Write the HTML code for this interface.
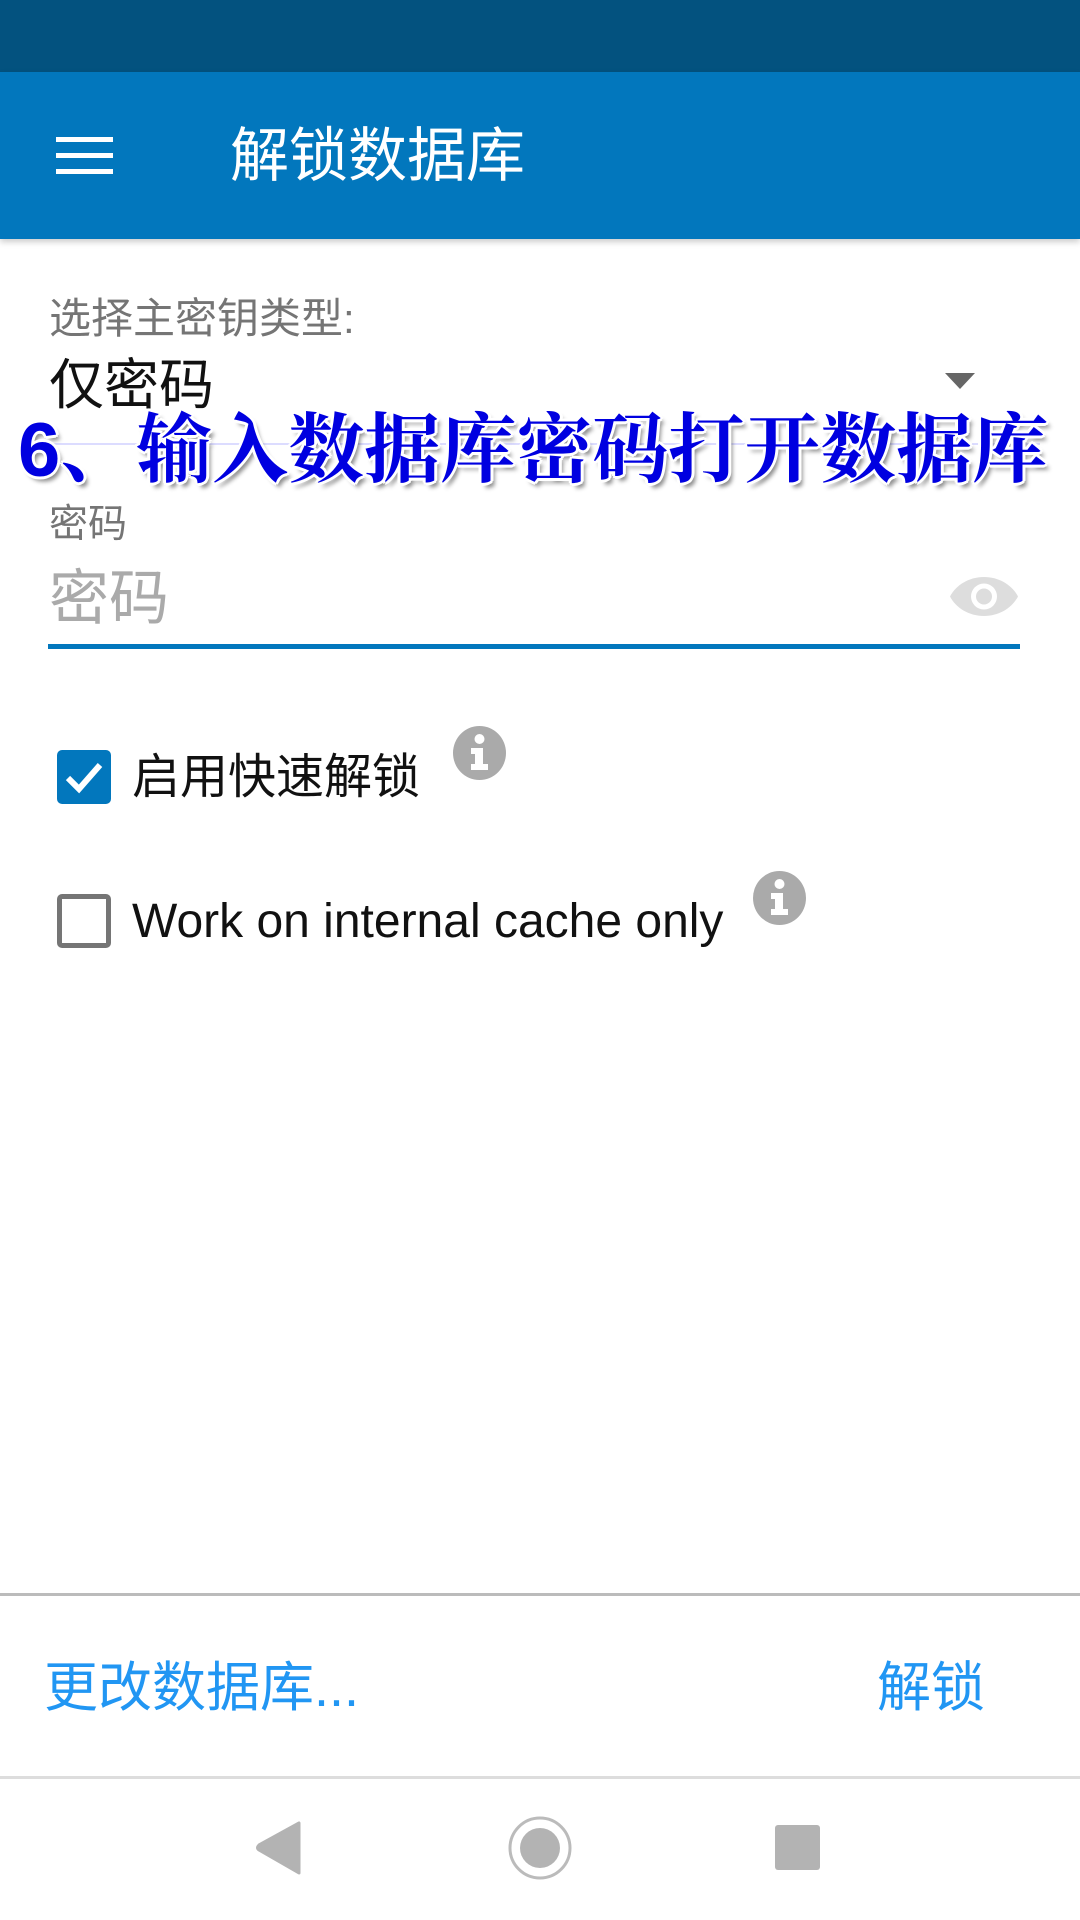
<!DOCTYPE html>
<html><head><meta charset="utf-8"><style>
*{margin:0;padding:0;box-sizing:border-box}
body{width:1080px;height:1920px;background:#fff;position:relative;overflow:hidden;font-family:"Liberation Sans","Noto Sans CJK SC",sans-serif}
.a{position:absolute;white-space:nowrap;line-height:1}
</style></head><body>
<div class="a" style="left:0;top:0;width:1080px;height:72px;background:#03527f"></div>
<div class="a" style="left:0;top:72px;width:1080px;height:167px;background:#0277bd;box-shadow:0 3px 6px rgba(0,0,0,0.2)"></div>
<div class="a" style="left:56px;top:137px;width:57px;height:5px;background:#fff"></div>
<div class="a" style="left:56px;top:153px;width:57px;height:5px;background:#fff"></div>
<div class="a" style="left:56px;top:169px;width:57px;height:5px;background:#fff"></div>
<div class="a" style="left:230px;top:127px;font-size:59px;color:#fff">解锁数据库</div>

<div class="a" style="left:49px;top:298px;font-size:42px;color:#757575">选择主密钥类型:</div>
<div class="a" style="left:49px;top:358px;font-size:55px;color:#111">仅密码</div>
<svg class="a" style="left:945px;top:373px" width="30" height="16"><path d="M0 0H30L15 16Z" fill="#666"/></svg>
<div class="a" style="left:40px;top:443px;width:1000px;height:2px;background:#dcdcff"></div>

<div class="a" style="left:49px;top:505px;font-size:39px;color:#757575">密码</div>
<div class="a" style="left:49px;top:569px;font-size:60px;color:#aaa">密码</div>
<svg class="a" style="left:949px;top:575px" width="70" height="43" viewBox="0 0 70 43"><path d="M35 2C20 2 7 10 1 21.5 7 33 20 41 35 41S63 33 69 21.5C63 10 50 2 35 2Z" fill="#ddd"/><circle cx="35" cy="21.5" r="13" fill="#fff"/><circle cx="35" cy="21.5" r="8" fill="#ddd"/></svg>
<div class="a" style="left:48px;top:644px;width:972px;height:5px;background:#0277bd"></div>

<div class="a" style="left:57px;top:750px;width:54px;height:54px;background:#0277bd;border-radius:5px"></div>
<svg class="a" style="left:57px;top:750px" width="54" height="54"><path d="M11 28L22 39L43 15" stroke="#fff" stroke-width="6" fill="none"/></svg>
<div class="a" style="left:132px;top:754px;font-size:48px;color:#111">启用快速解锁</div>
<svg class="a" style="left:453px;top:726px" width="53" height="54" viewBox="0 0 53 54"><ellipse cx="26.5" cy="27" rx="26.5" ry="27" fill="#aaa"/><circle cx="26.5" cy="13" r="5" fill="#fff"/><path d="M18 22H30V38H35V44H18V38H22V28H18Z" fill="#fff"/></svg>

<div class="a" style="left:57px;top:894px;width:54px;height:54px;border:5px solid #757575;border-radius:5px"></div>
<div class="a" style="left:132px;top:898px;font-size:48px;color:#111">Work on internal cache only</div>
<svg class="a" style="left:753px;top:871px" width="53" height="54" viewBox="0 0 53 54"><ellipse cx="26.5" cy="27" rx="26.5" ry="27" fill="#aaa"/><circle cx="26.5" cy="13" r="5" fill="#fff"/><path d="M18 22H30V38H35V44H18V38H22V28H18Z" fill="#fff"/></svg>

<div class="a" style="left:18px;top:413px;font-size:76px;font-weight:bold;color:#0000e0;font-family:'Liberation Sans','Noto Serif CJK SC',serif;text-shadow:3px 0 0 #fff,-3px 0 0 #fff,0 3px 0 #fff,0 -3px 0 #fff,2px 2px 0 #fff,-2px -2px 0 #fff,2px -2px 0 #fff,-2px 2px 0 #fff,4px 5px 4px rgba(0,0,0,0.45)">6、输入数据库密码打开数据库</div>

<div class="a" style="left:0;top:1593px;width:1080px;height:3px;background:#bbb"></div>
<div class="a" style="left:44px;top:1661px;font-size:54px;color:#2196f3">更改数据库...</div>
<div class="a" style="left:877px;top:1661px;font-size:54px;color:#2196f3">解锁</div>
<div class="a" style="left:0;top:1776px;width:1080px;height:3px;background:#ddd"></div>

<svg class="a" style="left:255px;top:1820px" width="48" height="56"><path d="M44 3V53L4 30Q1 28 4 25Z" fill="#b3b3b3" stroke="#b3b3b3" stroke-width="3" stroke-linejoin="round"/></svg>
<svg class="a" style="left:505px;top:1813px" width="70" height="70"><circle cx="35" cy="35" r="30" fill="none" stroke="#bbb" stroke-width="3"/><circle cx="35" cy="35" r="20" fill="#b3b3b3"/></svg>
<div class="a" style="left:775px;top:1825px;width:45px;height:45px;background:#b3b3b3;border-radius:3px"></div>
</body></html>
